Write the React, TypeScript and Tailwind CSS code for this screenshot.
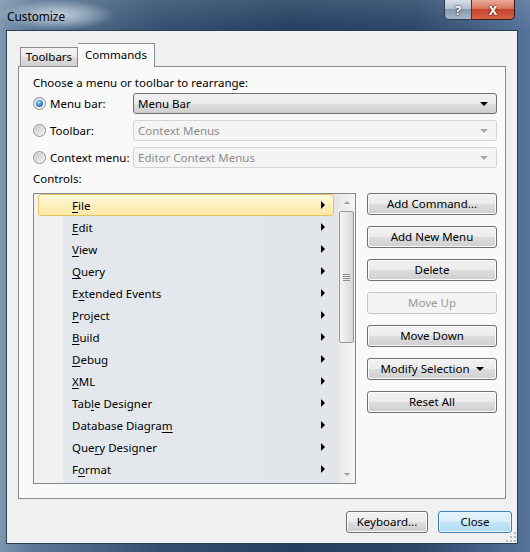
import React from "react";

const items: { pre: string; u: string; post: string }[] = [
  { pre: "", u: "F", post: "ile" },
  { pre: "", u: "E", post: "dit" },
  { pre: "", u: "V", post: "iew" },
  { pre: "", u: "Q", post: "uery" },
  { pre: "E", u: "x", post: "tended Events" },
  { pre: "", u: "P", post: "roject" },
  { pre: "", u: "B", post: "uild" },
  { pre: "", u: "D", post: "ebug" },
  { pre: "", u: "X", post: "ML" },
  { pre: "Tab", u: "l", post: "e Designer" },
  { pre: "Database Diagra", u: "m", post: "" },
  { pre: "Que", u: "r", post: "y Designer" },
  { pre: "F", u: "o", post: "rmat" },
];

function Btn({ label, disabled, children }: { label: string; disabled?: boolean; children?: React.ReactNode }) {
  return (
    <div
      className={
        disabled
          ? "h-[22px] w-[130px] rounded-[3px] border border-[#c3c6c9] bg-[#f4f4f4] text-[#9a9a9a] flex items-center justify-center"
          : "h-[22px] w-[130px] rounded-[3px] border border-[#707070] bg-[linear-gradient(to_bottom,#f2f2f2_0%,#ebebeb_50%,#dddddd_51%,#cfcfcf_100%)] shadow-[inset_0_0_0_1px_#fbfbfb] flex items-center justify-center"
      }
    >
      <span>{label}</span>
      {children}
    </div>
  );
}

function Radio({ checked }: { checked?: boolean }) {
  return (
    <div className="w-[13px] h-[13px] rounded-full border border-[#8e8f8f] bg-[linear-gradient(to_bottom_right,#dcdcdc,#f8f8f8)] flex items-center justify-center shrink-0">
      {checked ? (
        <div className="w-[7px] h-[7px] rounded-full bg-[radial-gradient(circle_at_40%_35%,#b7e3fb_0%,#3d8fd4_45%,#1a4f8c_100%)]" />
      ) : (
        <div className="w-[9px] h-[9px] rounded-full bg-[linear-gradient(to_bottom_right,#c8c8c8,#f2f2f2)]" />
      )}
    </div>
  );
}

function Combo({ text, disabled }: { text: string; disabled?: boolean }) {
  return (
    <div
      className={
        disabled
          ? "w-[364px] h-[21px] rounded-[3px] border border-[#d2d4d6] bg-[#f4f4f4] text-[#8d8d8d] flex items-center pl-[4px] pr-[8px]"
          : "w-[364px] h-[21px] rounded-[3px] border border-[#707070] bg-[linear-gradient(to_bottom,#f2f2f2_0%,#ebebeb_50%,#dddddd_51%,#cfcfcf_100%)] flex items-center pl-[4px] pr-[8px]"
      }
    >
      <span className="flex-1">{text}</span>
      <div
        className={
          disabled
            ? "w-0 h-0 border-x-[4px] border-x-transparent border-t-[4px] border-t-[#a9a9a9]"
            : "w-0 h-0 border-x-[4px] border-x-transparent border-t-[4px] border-t-black"
        }
      />
    </div>
  );
}

export default function App() {
  return (
    <div className="w-[530px] h-[552px] overflow-hidden flex flex-col font-['Segoe_UI','Noto_Sans',sans-serif] text-[11.5px] leading-[16px] text-black bg-[linear-gradient(to_right,#7d96b0_0%,#5b7896_6%,#33506f_30%,#23405f_55%,#2a4768_78%,#56739a_100%)]">
      {/* title bar */}
      <div className="h-[30px] flex shrink-0 bg-[linear-gradient(to_bottom,rgba(255,255,255,0.12),rgba(255,255,255,0))]">
        <div className="pl-[7px] pt-[8px] pr-[50px] text-[11.8px] bg-[radial-gradient(closest-side,rgba(215,224,233,0.85)_0%,rgba(195,208,221,0.5)_55%,rgba(195,208,221,0)_100%)]">
          Customize
        </div>
        <div className="ml-auto mr-[15px] flex self-start">
          <div className="w-[28px] h-[20px] border border-[#2b3a4c] border-t-0 rounded-bl-[5px] bg-[linear-gradient(to_bottom,#d5dee7_0%,#b2c1d0_45%,#8599ad_50%,#a7b8c9_100%)] flex items-center justify-center text-white font-bold text-[13px] [text-shadow:0_0_2px_#223,0_0_1px_#223]">
            ?
          </div>
          <div className="w-[43px] h-[20px] border border-[#3a1a14] border-t-0 border-l-0 rounded-br-[5px] bg-[linear-gradient(to_bottom,#e9a999_0%,#d9775f_45%,#c7432a_50%,#d8654a_100%)] flex items-center justify-center text-white font-bold text-[13px] [text-shadow:0_0_2px_#400,0_0_1px_#400]">
            X
          </div>
        </div>
      </div>

      <div className="flex pl-[6px]">
        {/* client */}
        <div className="w-[512px] h-[514px] border border-[#2b4056] bg-[#f0f0f0] flex flex-col pt-[12px] pl-[11px] relative">
          {/* tabs */}
          <div className="flex items-end h-[23px] pl-[2px]">
            <div className="w-[58px] h-[19px] border border-b-0 border-[#898c95] bg-[linear-gradient(to_bottom,#f2f2f2_0%,#ebebeb_50%,#dddddd_51%,#cfcfcf_100%)] flex items-center justify-center">
              Toolbars
            </div>
            <div className="w-[77px] h-[24px] -mb-px relative z-10 border border-b-0 border-l-0 border-[#898c95] bg-[#f9f9f9] flex items-center justify-center pb-[2px]">
              Commands
            </div>
          </div>

          {/* panel */}
          <div className="w-[488px] h-[433px] border border-[#898c95] bg-[#f9f9f9] pl-[14px] pt-[8px] flex flex-col">
            <div>Choose a menu or toolbar to rearrange:</div>
            <div className="mt-[2px] flex flex-col gap-[6px]">
              <div className="flex items-center h-[21px]">
                <div className="w-[100px] flex items-center gap-[4px]">
                  <Radio checked />
                  <span>Menu bar:</span>
                </div>
                <Combo text="Menu Bar" />
              </div>
              <div className="flex items-center h-[21px]">
                <div className="w-[100px] flex items-center gap-[4px]">
                  <Radio />
                  <span>Toolbar:</span>
                </div>
                <Combo text="Context Menus" disabled />
              </div>
              <div className="flex items-center h-[21px]">
                <div className="w-[100px] flex items-center gap-[4px]">
                  <Radio />
                  <span>Context menu:</span>
                </div>
                <Combo text="Editor Context Menus" disabled />
              </div>
            </div>
            <div className="mt-[3px]">Controls:</div>

            <div className="mt-[6px] flex gap-[11px]">
              {/* list */}
              <div className="w-[323px] h-[291px] border border-[#828790] flex bg-[#f0f1f3]">
                <div className="flex-1 bg-[linear-gradient(to_right,#f0f1f3_0px,#f0f1f3_29px,#e4e8ec_29px,#e2e6eb_100%)] flex flex-col">
                  {items.map((it, i) => (
                    <div
                      key={i}
                      className={
                        i === 0
                          ? "h-[22px] mx-[4px] rounded-[3px] border border-[#e5c365] bg-[linear-gradient(to_bottom,#fff8dc_0%,#fdeeb8_60%,#fde7a6_100%)] flex items-center pl-[33px] pr-[8px]"
                          : "h-[22px] mx-[4px] border border-transparent flex items-center pl-[33px] pr-[8px]"
                      }
                    >
                      <span className="flex-1 pt-[1px]">
                        {it.pre}
                        <span className="underline underline-offset-2">{it.u}</span>
                        {it.post}
                      </span>
                      <div className="w-0 h-0 border-y-[4px] border-y-transparent border-l-[4px] border-l-black" />
                    </div>
                  ))}
                </div>
                {/* scrollbar */}
                <div className="w-[17px] bg-[linear-gradient(to_right,#e9e9e9,#f5f5f5)] flex flex-col items-center">
                  <div className="h-[17px] w-full flex items-center justify-center">
                    <div className="w-0 h-0 border-x-[3px] border-x-transparent border-b-[3px] border-b-[#a0a0a0]" />
                  </div>
                  <div className="w-[15px] h-[132px] rounded-[2px] border border-[#979797] bg-[linear-gradient(to_right,#f4f4f4_0%,#e8e8e8_50%,#d6d6d6_100%)] flex flex-col items-center justify-center gap-[1px]">
                    <div className="w-[7px] h-[1px] bg-[#8a8a8a]" />
                    <div className="w-[7px] h-[1px] bg-[#8a8a8a]" />
                    <div className="w-[7px] h-[1px] bg-[#8a8a8a]" />
                    <div className="w-[7px] h-[1px] bg-[#8a8a8a]" />
                  </div>
                  <div className="flex-1" />
                  <div className="h-[17px] w-full flex items-center justify-center">
                    <div className="w-0 h-0 border-x-[3px] border-x-transparent border-t-[3px] border-t-[#a0a0a0]" />
                  </div>
                </div>
              </div>

              {/* buttons */}
              <div className="flex flex-col gap-[11px]">
                <Btn label="Add Command..." />
                <Btn label="Add New Menu" />
                <Btn label="Delete" />
                <Btn label="Move Up" disabled />
                <Btn label="Move Down" />
                <Btn label="Modify Selection">
                  <div className="ml-[6px] w-0 h-0 border-x-[4px] border-x-transparent border-t-[4px] border-t-black" />
                </Btn>
                <Btn label="Reset All" />
              </div>
            </div>
          </div>

          {/* bottom buttons */}
          <div className="mt-[12px] flex justify-end gap-[10px] pr-[5px]">
            <div className="h-[22px] w-[82px] rounded-[3px] border border-[#707070] bg-[linear-gradient(to_bottom,#f2f2f2_0%,#ebebeb_50%,#dddddd_51%,#cfcfcf_100%)] shadow-[inset_0_0_0_1px_#fbfbfb] flex items-center justify-center">
              Keyboard...
            </div>
            <div className="h-[22px] w-[74px] rounded-[3px] border border-[#3c7fb1] bg-[linear-gradient(to_bottom,#e5f4fc_0%,#d6eefb_50%,#c2e5f8_51%,#b0dbf3_100%)] shadow-[inset_0_0_0_1px_#e8f6fd] flex items-center justify-center">
              Close
            </div>
          </div>

          {/* size grip */}
          <svg className="absolute right-[1px] bottom-[1px]" width="11" height="11" viewBox="0 0 11 11">
            {[
              [9, 1], [9, 5], [5, 5], [9, 9], [5, 9], [1, 9],
            ].map(([x, y], i) => (
              <rect key={i} x={x} y={y} width="2" height="2" fill="#b8bcc2" />
            ))}
          </svg>
        </div>
      </div>
    </div>
  );
}
